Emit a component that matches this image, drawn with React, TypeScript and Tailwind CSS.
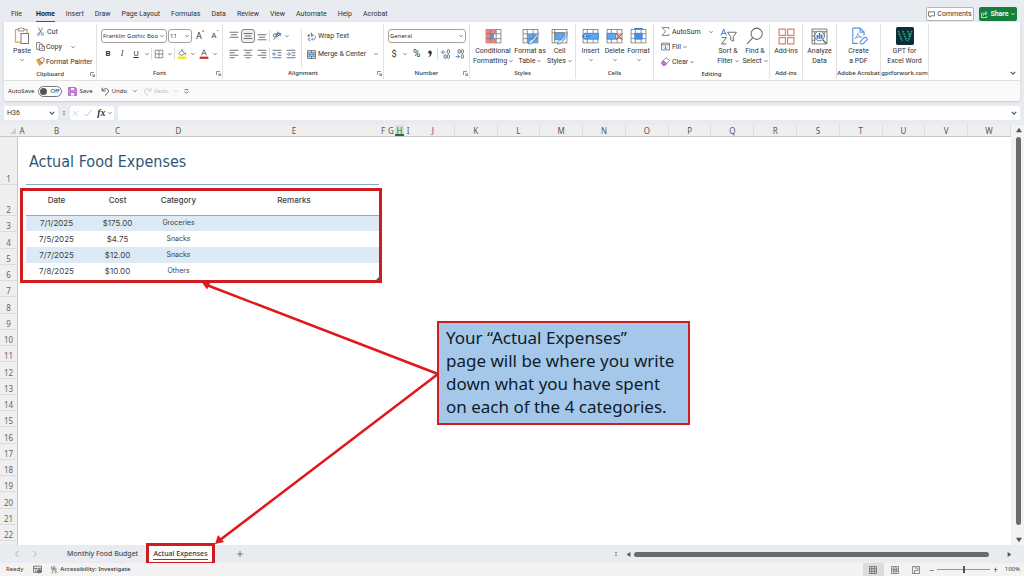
import React from "react";

const MENU = ["File", "Home", "Insert", "Draw", "Page Layout", "Formulas", "Data", "Review", "View", "Automate", "Help", "Acrobat"];

const NARROW_COLUMNS = [
  { name: "A", width: "w-[8px]" },
  { name: "B", width: "w-[61px]" },
  { name: "C", width: "w-[61px]" },
  { name: "D", width: "w-[61px]" },
  { name: "E", width: "w-[170px]" },
  { name: "F", width: "w-[8px]" },
  { name: "G", width: "w-[8px]" },
  { name: "H", width: "w-[9px]" },
  { name: "I", width: "w-[8px]" },
];
const WIDE_COLUMNS = "JKLMNOPQRSTUVW".split("");

const EXPENSES = [
  { date: "7/1/2025", cost: "$175.00", category: "Groceries" },
  { date: "7/5/2025", cost: "$4.75", category: "Snacks" },
  { date: "7/7/2025", cost: "$12.00", category: "Snacks" },
  { date: "7/8/2025", cost: "$10.00", category: "Others" },
];

type Kids = { children?: React.ReactNode };

function Icon({ className = "size-2.5", box = 16, children }: Kids & { className?: string; box?: number }) {
  return (
    <svg viewBox={`0 0 ${box} ${box}`} className={`shrink-0 ${className}`} fill="none" stroke="#555" strokeWidth="1.3" aria-hidden="true">
      {children}
    </svg>
  );
}

function Caret({ className = "size-1" }: { className?: string }) {
  return (
    <svg viewBox="0 0 8 8" className={`shrink-0 ${className}`} fill="none" stroke="#555" strokeWidth="1.6" aria-hidden="true">
      <path d="M1 2.5 4 5.5 7 2.5" />
    </svg>
  );
}

function Rule({ className = "h-3" }: { className?: string }) {
  return <span className={`w-px shrink-0 bg-[#dcdcdc] ${className}`} />;
}

function Group({ label, launcher, width, children }: Kids & { label?: string; launcher?: boolean; width: string }) {
  return (
    <section className={`mb-px mt-0.5 flex shrink-0 flex-col border-r border-[#e2e2e2] ${width}`}>
      <div className="flex flex-1 justify-center">{children}</div>
      <div className="relative flex h-[11px] items-center justify-center">
        <span className="whitespace-nowrap font-['Noto_Sans'] text-[6px] font-medium leading-[9px] text-[#333]">{label}</span>
        {launcher && (
          <button aria-label={`${label} settings`} className="absolute right-px">
            <Icon className="size-[5px]" box={10}>
              <path d="M1 8V1h7M4 4l4.500 4.500M9 4.500V9H4.500" />
            </Icon>
          </button>
        )}
      </div>
    </section>
  );
}

function BigButton({ lines, caret, icon, width }: { lines: string[]; caret?: boolean; icon: React.ReactNode; width: string }) {
  const below = caret && lines.length === 1;
  return (
    <button className={`flex shrink-0 flex-col items-center pt-0.5 ${width}`}>
      <span className="flex h-[20px] items-center">{icon}</span>
      {lines.map((line, i) => (
        <span key={line} className="flex items-center gap-0.5 whitespace-nowrap leading-[10px]">
          {line}
          {caret && !below && i === lines.length - 1 && <Caret />}
        </span>
      ))}
      {below && (
        <span className="flex h-2 items-center">
          <Caret />
        </span>
      )}
    </button>
  );
}

function IconButton({ label, width = "w-3.5", boxed, children }: Kids & { label: string; width?: string; boxed?: boolean }) {
  return (
    <button
      aria-label={label}
      className={`flex h-3.5 shrink-0 items-center justify-center ${width} ${boxed ? "rounded-[3px] border border-[#8a8a8a] bg-[#f0f0f0]" : ""}`}
    >
      {children}
    </button>
  );
}

function SelectBox({ label, value, className }: { label: string; value: string; className: string }) {
  return (
    <div className={`relative flex h-[14px] shrink-0 items-center rounded-[3px] border border-[#a4a4a4] bg-white ${className}`}>
      <select
        aria-label={label}
        className="h-3 w-full appearance-none bg-transparent pl-px font-['Noto_Sans'] text-[6px] leading-3 outline-none"
        defaultValue={value}
      >
        <option>{value}</option>
      </select>
      <span className="pointer-events-none absolute right-0.5">
        <Caret />
      </span>
    </div>
  );
}

function Lines({ rows }: { rows: [number, number, number][] }) {
  return (
    <Icon>
      {rows.map(([y, a, b]) => (
        <path key={y} d={`M${a} ${y}H${b}`} />
      ))}
    </Icon>
  );
}

function GridArt({ children }: Kids) {
  return (
    <svg viewBox="0 0 32 32" className="size-[17px]" fill="none" stroke="#777" strokeWidth="1.5" aria-hidden="true">
      <rect x="2" y="3" width="28" height="25" fill="#fff" />
      {children}
    </svg>
  );
}

const gridLines = <path d="M2 11H30M2 20H30M10 3V28M21 3V28" />;
const brush = <path d="M31 9 19 22q-6 0-7 8 8 1 10-5L32 12z" fill="#cfe6fa" stroke="#3b82c8" />;

function ClipboardGroup() {
  return (
    <Group label="Clipboard" launcher width="w-[93px]">
      <div className="flex flex-1 gap-0.5 pl-1.5">
        <BigButton
          width="w-6"
          lines={["Paste"]}
          caret
          icon={
            <svg viewBox="0 0 32 36" className="h-[18px] w-4" fill="none" aria-hidden="true">
              <path d="M9 5H3v25h10M20 5h6v7" stroke="#e8a33d" strokeWidth="2.500" />
              <path d="M9 3h3q2.500-4 5 0h3v5H9z" fill="#fff" stroke="#777" strokeWidth="1.600" />
              <rect x="14" y="13" width="15" height="20" fill="#fff" stroke="#777" strokeWidth="2" />
            </svg>
          }
        />
        <div className="flex flex-col">
          <button className="flex h-[15px] items-center gap-0.5">
            <Icon className="size-[9px]">
              <path d="M4 1l6 10M12 1 6 11" />
              <circle cx="4.500" cy="13" r="2" stroke="#2b7cd3" />
              <circle cx="11.500" cy="13" r="2" stroke="#2b7cd3" />
            </Icon>
            Cut
          </button>
          <button className="flex h-[15px] items-center gap-px">
            <Icon className="size-[9px]">
              <path d="M6 13H1V1h6l2 2M6 4h5l4 4v7H6zM11 4v4h4M8 11h5" />
            </Icon>
            Copy
            <span className="pl-2">
              <Caret />
            </span>
          </button>
          <button className="flex h-[15px] items-center gap-px whitespace-nowrap">
            <Icon className="size-[9px]">
              <path d="M1 5l5 10 6-4-7-7z" fill="#f2a03d" stroke="#e08a20" />
              <path d="M5 4l6 7 2-3 2-5-3-2-4 2z" fill="#fff" />
            </Icon>
            Format Painter
          </button>
        </div>
      </div>
    </Group>
  );
}

function FontGroup() {
  return (
    <Group label="Font" launcher width="w-[126px]">
      <div className="flex flex-1 flex-col pl-1 pt-[5px]">
        <div className="flex items-center gap-px">
          <SelectBox label="Font name" value="Franklin Gothic Boo" className="w-[66px]" />
          <SelectBox label="Font size" value="11" className="w-6" />
          <IconButton label="Increase font size">
            <span className="text-[9px] leading-3">A</span>
            <span className="self-start text-[5px] leading-[6px]">^</span>
          </IconButton>
          <IconButton label="Decrease font size">
            <span className="text-[8px] leading-3">A</span>
            <span className="self-start text-[5px] leading-[6px]">ˇ</span>
          </IconButton>
        </div>
        <div className="mt-1 flex items-center text-[8px]">
          <IconButton label="Bold"><b>B</b></IconButton>
          <IconButton label="Italic"><i className="font-['Liberation_Serif']">I</i></IconButton>
          <IconButton label="Underline"><u>U</u></IconButton>
          <IconButton label="Underline style" width="w-2"><Caret /></IconButton>
          <Rule />
          <IconButton label="Borders">
            <Icon><path d="M2 2h12v12H2zM8 2v12M2 8h12" strokeWidth="1" /></Icon>
          </IconButton>
          <IconButton label="Border style" width="w-2"><Caret /></IconButton>
          <Rule />
          <IconButton label="Fill color">
            <Icon>
              <path d="M3 7l5-5 4 5-5 4zM8 2V0M13 6q2 3 0 4" />
              <path d="M1 14h14" stroke="#f7e600" strokeWidth="3.500" />
            </Icon>
          </IconButton>
          <IconButton label="Fill color options" width="w-2"><Caret /></IconButton>
          <IconButton label="Font color">
            <Icon>
              <path d="M4 10 8 1l4 9M5.500 7h5" />
              <path d="M1 14h14" stroke="#d92323" strokeWidth="3.500" />
            </Icon>
          </IconButton>
          <IconButton label="Font color options" width="w-2"><Caret /></IconButton>
        </div>
      </div>
    </Group>
  );
}

function AlignmentGroup() {
  return (
    <Group label="Alignment" launcher width="w-[161px]">
      <div className="flex flex-1 pl-1 pt-[5px]">
        <div className="flex w-[75px] flex-col gap-1 border-r border-[#e2e2e2]">
          <div className="flex items-center">
            <IconButton label="Top align"><Lines rows={[[2, 1, 15], [6, 3, 13], [10, 1, 15]]} /></IconButton>
            <IconButton label="Middle align" boxed><Lines rows={[[4, 1, 15], [8, 3, 13], [12, 1, 15]]} /></IconButton>
            <IconButton label="Bottom align"><Lines rows={[[6, 1, 15], [10, 3, 13], [14, 1, 15]]} /></IconButton>
            <Rule />
            <IconButton label="Orientation">
              <Icon>
                <path d="M2 14 14 4M10 3l4 1-1 4" stroke="#2b7cd3" />
                <circle cx="4.500" cy="7" r="2.500" />
                <path d="M7 4v5M9 1v6M9 4q4-1 3 2t-3 0" />
              </Icon>
            </IconButton>
            <IconButton label="Orientation options" width="w-1.5"><Caret /></IconButton>
          </div>
          <div className="flex items-center">
            <IconButton label="Align left"><Lines rows={[[2, 1, 15], [6, 1, 9], [10, 1, 15], [14, 1, 9]]} /></IconButton>
            <IconButton label="Center"><Lines rows={[[2, 1, 15], [6, 4, 12], [10, 1, 15], [14, 4, 12]]} /></IconButton>
            <IconButton label="Align right"><Lines rows={[[2, 1, 15], [6, 7, 15], [10, 1, 15], [14, 7, 15]]} /></IconButton>
            <Rule />
            <IconButton label="Decrease indent">
              <Icon><path d="M1 2h14M9 6h6M9 10h6M1 14h14" /><path d="M7 8H1M4 5 1 8l3 3" stroke="#2b7cd3" /></Icon>
            </IconButton>
            <IconButton label="Increase indent">
              <Icon><path d="M1 2h14M9 6h6M9 10h6M1 14h14" /><path d="M1 8h6M4 5l3 3-3 3" stroke="#2b7cd3" /></Icon>
            </IconButton>
          </div>
        </div>
        <div className="flex flex-col gap-1 pl-[5px]">
          <button className="flex h-3.5 items-center gap-0.5">
            <Icon className="size-[9px]">
              <path d="M4 3v5M4 6q-3-1-3 1t3 0M8 1v7M8 5q4-1 4 1t-4 1M6 11q-4 0-4 2t4 2" />
              <path d="M8 13h4q3 0 3-3V7M10 11l-2 2 2 2" stroke="#2b7cd3" />
            </Icon>
            Wrap Text
          </button>
          <button className="flex h-3.5 items-center gap-0.5 whitespace-nowrap">
            <Icon className="size-[9px]">
              <path d="M1 1h14v14H1z" fill="#cfe6fa" />
              <path d="M1 5h14M1 11h14M8 1v4M8 11v4" />
              <path d="M3 8h10M5 6 3 8l2 2M11 6l2 2-2 2" stroke="#2b7cd3" />
            </Icon>
            Merge &amp; Center
            <span className="pl-1.5"><Caret /></span>
          </button>
        </div>
      </div>
    </Group>
  );
}

function NumberGroup() {
  return (
    <Group label="Number" launcher width="w-[86px]">
      <div className="flex flex-1 flex-col pl-1 pr-[3px] pt-[5px]">
        <SelectBox label="Number format" value="General" className="w-full" />
        <div className="mt-1 flex items-center justify-between text-[9px]">
          <IconButton label="Currency" width="w-3">$</IconButton>
          <IconButton label="Currency options" width="w-1.5"><Caret /></IconButton>
          <IconButton label="Percent"><span className="text-[10px]">%</span></IconButton>
          <IconButton label="Comma style" width="w-2.5">
            <svg viewBox="0 0 10 16" className="h-2.5 w-1.5" aria-hidden="true">
              <path d="M2 5a3 3 0 1 1 6 0q0 6-5 8l-.5-1q3-2 2.500-4a3 3 0 0 1-3-3z" fill="#333" />
            </svg>
          </IconButton>
          <Rule />
          <IconButton label="Increase decimal" width="w-3">
            <Icon>
              <path d="M1 5h6M4 2 1 5l3 3" stroke="#2b7cd3" />
              <rect x="10" y="1" width="3.500" height="6" rx="1.700" /><rect x="5" y="9" width="3.500" height="6" rx="1.700" /><rect x="10" y="9" width="3.500" height="6" rx="1.700" />
            </Icon>
          </IconButton>
          <IconButton label="Decrease decimal" width="w-3">
            <Icon>
              <path d="M1 12h6M4 9l3 3-3 3" stroke="#2b7cd3" />
              <rect x="5" y="1" width="3.500" height="6" rx="1.700" /><rect x="10" y="1" width="3.500" height="6" rx="1.700" /><rect x="10" y="9" width="3.500" height="6" rx="1.700" />
            </Icon>
          </IconButton>
        </div>
      </div>
    </Group>
  );
}

function StylesGroup() {
  return (
    <Group label="Styles" width="w-[106px]">
      <BigButton
        width="w-[40px]"
        lines={["Conditional", "Formatting"]}
        caret
        icon={
          <GridArt>
            <path d="M2 3h19v8H2zM2 20h19v8H2zM2 11h8v9H2z" fill="#f58080" stroke="none" />
            <path d="M10 11h7v9h-7z" fill="#4a9be8" stroke="none" />
            {gridLines}
          </GridArt>
        }
      />
      <BigButton
        width="w-[34px]"
        lines={["Format as", "Table"]}
        caret
        icon={
          <GridArt>
            <path d="M10 11h20v17H10z" fill="#5aa9f0" stroke="none" />
            {gridLines}
            {brush}
          </GridArt>
        }
      />
      <BigButton
        width="w-[25px]"
        lines={["Cell", "Styles"]}
        caret
        icon={
          <GridArt>
            <path d="M7 9h18v13H7z" fill="#5aa9f0" />
            <path d="M2 9h28M7 3v25" />
            {brush}
          </GridArt>
        }
      />
    </Group>
  );
}

function CellsGroup() {
  return (
    <Group label="Cells" width="w-[78px]">
      <BigButton
        width="w-6"
        lines={["Insert"]}
        caret
        icon={
          <GridArt>
            {gridLines}
            <path d="M8 10h23v11H8z" fill="#5aa9f0" stroke="#3b82c8" />
            <path d="M16 15.500H1M7 9 1 15.500 7 22" stroke="#2b7cd3" strokeWidth="2" />
          </GridArt>
        }
      />
      <BigButton
        width="w-6"
        lines={["Delete"]}
        caret
        icon={
          <GridArt>
            {gridLines}
            <path d="M2 10h16v11H2z" fill="#5aa9f0" stroke="#3b82c8" />
            <path d="M19 10 31 22M31 10 19 22" stroke="#e04848" strokeWidth="2" />
          </GridArt>
        }
      />
      <BigButton
        width="w-6"
        lines={["Format"]}
        caret
        icon={
          <GridArt>
            {gridLines}
            <path d="M9 10h14v11H9z" fill="#3f93e6" stroke="#3b82c8" />
            <path d="M8 1h16" stroke="#2b7cd3" strokeWidth="2" />
          </GridArt>
        }
      />
    </Group>
  );
}

function EditingGroup() {
  return (
    <Group label="Editing" width="w-[116px]">
      <div className="flex flex-1 flex-col pl-[7px]">
        <button className="flex h-[15px] items-center gap-0.5">
          <Icon className="size-[9px]"><path d="M14 4V1H2l6 7-6 7h12v-3" /></Icon>
          AutoSum
          <span className="pl-1.5"><Caret /></span>
        </button>
        <button className="flex h-[15px] items-center gap-0.5">
          <Icon className="size-[9px]"><path d="M1 2h14v12H1zM1 5h14" /><path d="M8 6v6M5 9.500l3 3 3-3" stroke="#2b7cd3" /></Icon>
          Fill
          <Caret />
        </button>
        <button className="flex h-[15px] items-center gap-0.5">
          <Icon className="size-[9px]">
            <path d="M1 10 9 1l6 5-8 9H4z" stroke="#a349b8" />
            <path d="M1 10l3-4 6 6-3 3H4z" fill="#c77dd6" stroke="#a349b8" />
          </Icon>
          Clear
          <Caret />
        </button>
      </div>
      <BigButton
        width="w-[26px]"
        lines={["Sort &", "Filter"]}
        caret
        icon={
          <svg viewBox="0 0 32 32" className="size-[17px]" fill="none" strokeWidth="1.800" aria-hidden="true">
            <path d="M2 14 7 2l5 12M4 10h6" stroke="#2b7cd3" />
            <path d="M3 18h9L3 30h9M14 8h17l-6 8v9l-5-3v-6z" stroke="#666" />
          </svg>
        }
      />
      <BigButton
        width="w-[28px]"
        lines={["Find &", "Select"]}
        caret
        icon={
          <svg viewBox="0 0 32 32" className="size-[18px]" fill="none" stroke="#666" strokeWidth="1.800" aria-hidden="true">
            <circle cx="19" cy="12" r="10" />
            <path d="M12 19 2 30" />
          </svg>
        }
      />
    </Group>
  );
}

function ExtraGroups() {
  return (
    <>
      <Group label="Add-ins" width="w-[33px]">
        <BigButton
          width="w-8"
          lines={["Add-ins"]}
          icon={
            <svg viewBox="0 0 32 32" className="size-[17px]" fill="none" stroke="#dd8260" strokeWidth="2.200" aria-hidden="true">
              <path d="M2 2h12v12H2zM18 2h12v12H18zM2 18h12v12H2zM18 18h12v12H18z" />
            </svg>
          }
        />
      </Group>
      <Group width="w-[34px]">
        <BigButton
          width="w-8"
          lines={["Analyze", "Data"]}
          icon={
            <svg viewBox="0 0 32 32" className="size-[17px]" fill="none" stroke="#666" strokeWidth="1.600" aria-hidden="true">
              <path d="M2 2h28v28H2zM2 7h28M7 7v23M2 15h5M2 23h5M25 7v10" />
              <circle cx="16" cy="15" r="9" fill="#fff" />
              <path d="M12 13v7M16 9v11M20 12v8" stroke="#2b7cd3" strokeWidth="3" />
              <path d="M22 22l7 7" strokeWidth="2.500" />
            </svg>
          }
        />
      </Group>
      <Group label="Adobe Acrobat" width="w-[44px]">
        <BigButton
          width="w-10"
          lines={["Create", "a PDF"]}
          icon={
            <svg viewBox="0 0 32 32" className="size-[18px]" fill="none" stroke="#5b96e3" strokeWidth="2" aria-hidden="true">
              <path d="M14 29H5V2h13l7 7v6M18 2v7h7" />
              <path d="M9 21q5-5 5-11M14 12q2 6 7 7M9 20q6-4 12-2" strokeWidth="1.400" />
              <path d="M18 27l6-7q4-3 6 0t-2 5l-5 5q-5 1-5-3z" />
            </svg>
          }
        />
      </Group>
      <Group label="gptforwork.com" width="w-[48px]">
        <BigButton
          width="w-11"
          lines={["GPT for", "Excel Word"]}
          icon={
            <svg viewBox="0 0 32 32" className="size-[18px]" aria-hidden="true">
              <rect width="32" height="32" rx="3" fill="#0d2d3a" />
              <path d="M4 7l7 18M12 7l7 18M21 7l5 12M28 7l-7 18" stroke="#27a87d" strokeWidth="3" strokeDasharray="3 1.500" fill="none" />
            </svg>
          }
        />
      </Group>
    </>
  );
}

function MenuBar() {
  return (
    <header className="flex h-[22px] shrink-0 items-end justify-between pl-[11px] pr-[7px] text-[7px]">
      <nav className="flex gap-[11px]">
        {MENU.map((name) => (
          <a
            key={name}
            href="#"
            className={`flex h-[13px] min-w-3.5 items-start whitespace-nowrap border-b leading-[10px] ${name === "Home" ? "border-[#1e7145] font-bold text-[#222]" : "border-transparent"}`}
          >
            {name}
          </a>
        ))}
      </nav>
      <div className="flex gap-[5px] pb-px">
        <button className="flex h-3.5 w-[48px] items-center justify-center gap-0.5 rounded-[2px] border border-[#b5b5b5] bg-white">
          <Icon className="size-[7px]"><path d="M1 2h14v9H7l-3 3v-3H1z" strokeWidth="1.800" /></Icon>
          Comments
        </button>
        <button className="flex h-3.5 w-[38px] items-center justify-center gap-0.5 rounded-[2px] bg-[#14803c] font-semibold text-white">
          <svg viewBox="0 0 16 16" className="size-[7px]" fill="none" stroke="#fff" strokeWidth="1.600" aria-hidden="true">
            <path d="M6 5H1v10h12v-4M5 11q0-6 6-6M9 1l5 4-5 4" />
          </svg>
          Share
          <svg viewBox="0 0 8 8" className="size-1" fill="none" stroke="#fff" strokeWidth="1.800" aria-hidden="true">
            <path d="M1 2.500 4 5.500 7 2.500" />
          </svg>
        </button>
      </div>
    </header>
  );
}

function QuickAccess() {
  return (
    <div className="flex h-[21px] items-center rounded-b-[4px] border-t border-[#e0e0e0] bg-[#fafafa] pl-1 font-['Noto_Sans'] text-[6px]">
      <span>AutoSave</span>
      <button role="switch" aria-checked="false" aria-label="AutoSave" className="ml-1 flex h-[11px] w-6 items-center gap-[3px] rounded-full border border-[#777] bg-white pl-px">
        <span className="size-[7px] rounded-full bg-[#555]" />
        Off
      </button>
      <button className="ml-1.5 flex items-center gap-0.5">
        <Icon className="size-[9px]">
          <path d="M1 1h12l2 2v12H1z" fill="#d58be3" stroke="#a04db8" />
          <path d="M4 1h8v5H4zM4 15v-5h8v5" fill="#fff" stroke="#a04db8" />
        </Icon>
        Save
      </button>
      <button className="ml-2 flex items-center gap-0.5">
        <Icon className="size-[9px]"><path d="M2 1v6h6M2 7q4-5 8-4 5 2 3 6-1 2-6 6" strokeWidth="1.600" /></Icon>
        Undo
        <span className="pl-1"><Caret /></span>
      </button>
      <button disabled className="ml-1.5 flex items-center gap-0.5 opacity-30">
        <Icon className="size-[9px]"><path d="M14 1v6H8M14 7q-4-5-8-4-5 2-3 6 1 2 6 6" strokeWidth="1.600" /></Icon>
        Redo
        <span className="pl-1"><Caret /></span>
      </button>
      <button aria-label="Customize toolbar" className="ml-1.5">
        <Icon className="size-[5px]" box={8}><path d="M1 1h6M1 4l3 3 3-3" /></Icon>
      </button>
    </div>
  );
}

function FormulaBar() {
  return (
    <div className="mx-1 mt-[5px] flex h-3.5 shrink-0 items-center gap-1">
      <div className="relative flex h-full w-[54px] items-center rounded-[2px] bg-white">
        <input aria-label="Name box" className="w-full bg-transparent pl-[3px] outline-none" defaultValue="H36" />
        <span className="pointer-events-none absolute right-[3px]"><Caret className="size-1.5" /></span>
      </div>
      <Icon className="h-2 w-1" box={8}><path d="M4 0v2M4 3v2M4 6v2" strokeWidth="2" /></Icon>
      <div className="flex h-full w-11 items-center justify-around rounded-[2px] bg-white">
        <button aria-label="Cancel"><Icon className="size-[7px]"><path d="M2 2l12 12M14 2 2 14" stroke="#bbb" /></Icon></button>
        <button aria-label="Enter"><Icon className="size-2"><path d="M1 9l4 5L15 2" stroke="#bbb" strokeWidth="1.600" /></Icon></button>
        <button aria-label="Insert function" className="flex items-center gap-0.5 font-['Liberation_Serif'] text-[10px] font-semibold italic leading-3">
          fx
          <Caret />
        </button>
      </div>
      <div className="flex h-full flex-1 items-center rounded-[2px] bg-white pr-[3px]">
        <input aria-label="Formula" className="flex-1 bg-transparent outline-none" />
        <Caret className="size-1.5" />
      </div>
    </div>
  );
}

function RowHeader() {
  const cell = "flex items-end justify-center border-b border-[#dcdcdc] font-['Noto_Sans'] text-[8px] leading-[11px]";
  return (
    <div className="flex w-[18px] shrink-0 flex-col border-r border-[#c8c8c8] bg-[#efefef] pb-1 text-[#666]">
      <div className={`h-12 shrink-0 ${cell}`}>1</div>
      <div className={`h-[31px] shrink-0 ${cell}`}>2</div>
      {Array.from({ length: 20 }, (_, i) => (
        <div key={i} className={`min-h-0 flex-1 ${cell}`}>{i + 3}</div>
      ))}
    </div>
  );
}

function ExpenseTable() {
  return (
    <div className="relative ml-2 w-[353px] text-[#404040]">
      <h1 className="flex h-12 items-center border-b border-[#7fb2c8] pl-[3px] pt-0.5 font-['DejaVu_Sans_Condensed','Noto_Sans'] text-[16px] text-[#2f5878]">Actual Food Expenses</h1>
      <table className="w-full table-fixed border-collapse text-center font-['Inter'] text-[8px] leading-[10px]">
        <colgroup>
          <col className="w-[61px]" />
          <col className="w-[61px]" />
          <col className="w-[61px]" />
          <col />
        </colgroup>
        <thead>
          <tr className="h-[30px] border-b border-[#8fa9bd]">
            {["Date", "Cost", "Category", "Remarks"].map((name) => (
              <th key={name} scope="col" className="font-medium">{name}</th>
            ))}
          </tr>
        </thead>
        <tbody>
          {EXPENSES.map((row) => (
            <tr key={row.date} className="h-4 odd:bg-[#dceaf5]">
              <td>{row.date}</td>
              <td>{row.cost}</td>
              <td className="text-[7px]">{row.category}</td>
              <td />
            </tr>
          ))}
        </tbody>
      </table>
      <svg viewBox="0 0 4 4" className="absolute right-0 top-[140px] size-[3px]" aria-hidden="true"><path d="M4 0v4H0z" fill="#2f5878" /></svg>
      <div className="pointer-events-none absolute -left-1.5 top-[51px] h-[95px] w-[362px] border-[3px] border-[#d01c1f]" />
    </div>
  );
}

function Annotations() {
  return (
    <>
      <svg className="pointer-events-none absolute left-0 top-0 h-[576px] w-[1024px]" viewBox="0 0 1024 576" fill="none" stroke="#e0181b" strokeWidth="2.500" aria-hidden="true">
        <path d="M438 374 208 285.500M438 374 220 540" />
        <path d="M202 282.500l9-1-4 8zM215 544l3-9 6 7z" fill="#e0181b" stroke="none" />
      </svg>
      <p className="absolute left-[437px] top-[321px] w-[253px] border-2 border-[#d01c1f] bg-[#a5c8ea] pb-[5px] pl-[7px] pt-[3px] font-['Noto_Sans'] text-[17px] leading-[23px] text-[#0e1c2b]">
        Your “Actual Expenses”
        <br />
        page will be where you write
        <br />
        down what you have spent
        <br />
        on each of the 4 categories.
      </p>
    </>
  );
}

function Sheet() {
  return (
    <main className="mt-[5px] flex min-h-0 flex-1">
      <div className="flex min-w-0 flex-1 flex-col">
        <div className="flex h-[12px] shrink-0 border-b border-[#c8c8c8] bg-[#efefef] text-center font-['Noto_Sans'] text-[8px] leading-[11px] text-[#555]">
          <div className="flex w-[18px] shrink-0 items-center justify-end pr-0.5">
            <svg viewBox="0 0 8 8" className="size-1.5" aria-hidden="true"><path d="M8 0v8H0z" fill="#cfcfcf" /></svg>
          </div>
          {NARROW_COLUMNS.map((c) => (
            <div key={c.name} className={`shrink-0 ${c.width} ${c.name === "H" ? "border-b-2 border-[#1e7145] bg-[#d4e3da] text-[#1e7145]" : ""}`}>
              {c.name}
            </div>
          ))}
          {WIDE_COLUMNS.map((name) => (
            <div key={name} className="flex-1 border-r border-[#dedede]">{name}</div>
          ))}
        </div>
        <div className="flex min-h-0 flex-1 bg-white">
          <RowHeader />
          <ExpenseTable />
        </div>
      </div>
      <div className="flex w-[13px] shrink-0 flex-col items-center gap-1 bg-[#f3f3f3] py-0.5 pl-0.5">
        <svg viewBox="0 0 8 8" className="size-1.5 shrink-0" aria-hidden="true"><path d="M4 1l4 6H0z" fill="#555" /></svg>
        <div className="w-[5px] flex-1 rounded-full bg-[#6b6b6b]" />
        <svg viewBox="0 0 8 8" className="mt-2 size-1.5 shrink-0" aria-hidden="true"><path d="M4 7l4-6H0z" fill="#555" /></svg>
      </div>
    </main>
  );
}

function SheetTabs() {
  return (
    <nav className="flex h-[18px] shrink-0 items-center font-['Noto_Sans'] text-[7px]">
      <button aria-label="Previous sheet" className="ml-3.5"><Icon className="size-1.5" box={8}><path d="M6 0 2 4l4 4" stroke="#999" strokeWidth="1" /></Icon></button>
      <button aria-label="Next sheet" className="ml-3"><Icon className="size-1.5" box={8}><path d="M2 0l4 4-4 4" stroke="#999" strokeWidth="1" /></Icon></button>
      <a href="#" className="ml-[29px] w-[73px] whitespace-nowrap">Monthly Food Budget</a>
      <a href="#" className="ml-[6px] flex h-[22px] w-[69px] items-center justify-center border-[3px] border-[#d01c1f] bg-[#fdfdfd]">
        <span className="whitespace-nowrap border-b border-[#1e7145] font-medium leading-[11px]">Actual Expenses</span>
      </a>
      <button aria-label="New sheet" className="ml-[22px]"><Icon className="size-1.5" box={8}><path d="M4 0v8M0 4h8" strokeWidth="1" /></Icon></button>
      <div className="ml-auto flex items-center pr-3">
        <Icon className="h-2 w-1" box={8}><path d="M4 0v2M4 3v2M4 6v2" strokeWidth="2" /></Icon>
        <svg viewBox="0 0 8 8" className="ml-2 size-[5px]" aria-hidden="true"><path d="M1 4l6-4v8z" fill="#555" /></svg>
        <div className="ml-[3px] h-[5px] w-[355px] rounded-full bg-[#6b6b6b]" />
        <svg viewBox="0 0 8 8" className="ml-[18px] size-[5px]" aria-hidden="true"><path d="M7 4 1 0v8z" fill="#555" /></svg>
      </div>
    </nav>
  );
}

function StatusBar() {
  return (
    <footer className="flex h-[13px] shrink-0 items-center bg-[#f3f3f3] pl-1.5 pr-1 font-['Noto_Sans'] text-[6px]">
      <span>Ready</span>
      <Icon className="ml-2.5 size-[9px]"><path d="M1 2h14v11H1zM1 6h14M5 6v7M9 10h4" /><circle cx="11" cy="11" r="3" fill="#777" /></Icon>
      <button className="ml-2 flex items-center gap-0.5 font-medium">
        <Icon className="size-2"><circle cx="8" cy="3" r="2" /><path d="M2 6h12M6 6v4l-2 5M10 6v4l2 5M3 1v4M12 10l3 3" /></Icon>
        Accessibility: Investigate
      </button>
      <div className="ml-auto flex items-center">
        <button aria-label="Normal view" className="flex h-[13px] w-[21px] items-center justify-center bg-[#dcdcdc]">
          <Icon className="size-2"><path d="M1 1h14v14H1zM1 5.500h14M1 10.500h14M5.500 1v14M10.500 1v14" /></Icon>
        </button>
        <button aria-label="Page layout view" className="flex w-[22px] justify-center">
          <Icon className="size-2"><path d="M1 1h14v14H1zM4 4h8v8H4zM4 7h8M4 9.500h8" /></Icon>
        </button>
        <button aria-label="Page break view" className="flex w-[21px] justify-center">
          <Icon className="size-2"><path d="M1 1h14v14H1zM5 15V9h7V4M5 4h7" /></Icon>
        </button>
        <button aria-label="Zoom out" className="ml-[3px] text-[8px] leading-[8px]">−</button>
        <input
          type="range"
          aria-label="Zoom"
          defaultValue={50}
          className="mx-[3px] h-2 w-[53px] appearance-none bg-transparent [&::-webkit-slider-runnable-track]:h-px [&::-webkit-slider-runnable-track]:bg-[#999] [&::-webkit-slider-thumb]:-mt-[3px] [&::-webkit-slider-thumb]:h-[7px] [&::-webkit-slider-thumb]:w-0.5 [&::-webkit-slider-thumb]:appearance-none [&::-webkit-slider-thumb]:bg-[#555]"
        />
        <button aria-label="Zoom in" className="text-[8px] leading-[8px]">+</button>
        <span className="ml-[7px]">100%</span>
      </div>
    </footer>
  );
}

export default function App() {
  return (
    <div className="relative flex h-screen flex-col overflow-hidden bg-[#e8ebf0] font-['Roboto',sans-serif] text-[7px] text-[#333]">
      <MenuBar />
      <div className="mx-1 shrink-0 rounded-b-[4px] bg-white shadow-sm">
        <div className="flex h-[58px] items-stretch leading-[10px]">
          <ClipboardGroup />
          <FontGroup />
          <AlignmentGroup />
          <NumberGroup />
          <StylesGroup />
          <CellsGroup />
          <EditingGroup />
          <ExtraGroups />
          <button aria-label="Collapse ribbon" className="ml-auto self-end p-1"><Caret className="size-1.5" /></button>
        </div>
        <QuickAccess />
      </div>
      <FormulaBar />
      <Sheet />
      <SheetTabs />
      <StatusBar />
      <Annotations />
    </div>
  );
}
